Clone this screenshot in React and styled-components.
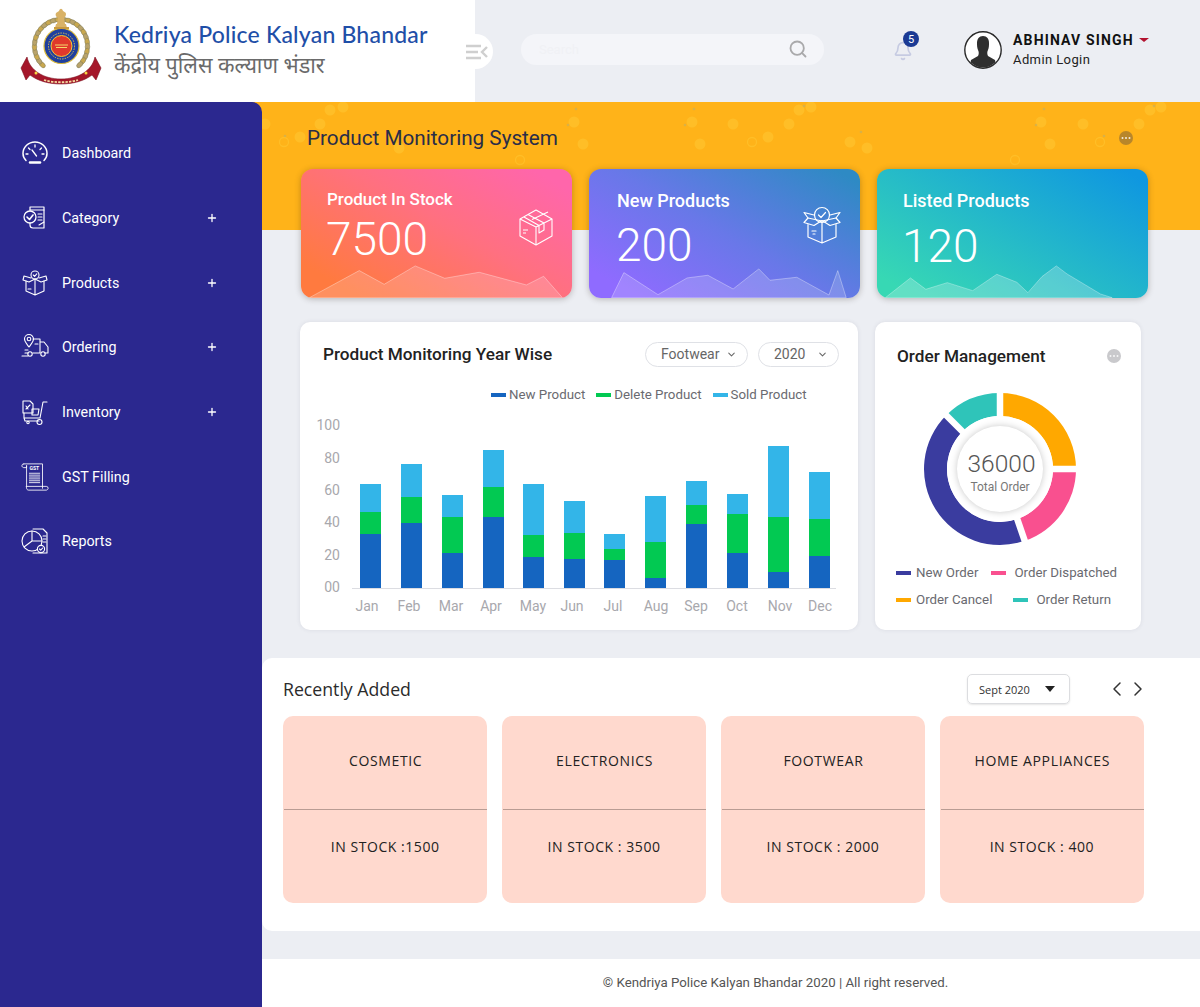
import React from "react";
import styled, { createGlobalStyle } from "styled-components";
import { Bell, ChevronDown, ChevronLeft, ChevronRight, Plus, Search } from "lucide-react";

const GlobalStyle = createGlobalStyle`
  * { box-sizing: border-box; }
  html, body { margin: 0; padding: 0; background: #eceef3; }
  body { font-family: Roboto, "Liberation Sans", sans-serif; }
`;

//Data
const bars = [
  { x: 360, top: 484, mid: 512, low: 534 },
  { x: 401, top: 464, mid: 497, low: 523 },
  { x: 442, top: 495, mid: 517, low: 553 },
  { x: 483, top: 450, mid: 487, low: 517 },
  { x: 523, top: 484, mid: 535, low: 557 },
  { x: 564, top: 501, mid: 533, low: 559 },
  { x: 604, top: 534, mid: 549, low: 560 },
  { x: 645, top: 496, mid: 542, low: 578 },
  { x: 686, top: 481, mid: 505, low: 524 },
  { x: 727, top: 494, mid: 514, low: 553 },
  { x: 768, top: 446, mid: 517, low: 572 },
  { x: 809, top: 472, mid: 519, low: 556 },
];
const months = [
  ["Jan", 367], ["Feb", 409], ["Mar", 451], ["Apr", 491], ["May", 533], ["Jun", 572],
  ["Jul", 613], ["Aug", 656], ["Sep", 696], ["Oct", 737], ["Nov", 780], ["Dec", 820],
];
const yTicks = [["100", 430], ["80", 463], ["60", 495], ["40", 527], ["20", 560], ["00", 592]];

const recent = [
  { name: "COSMETIC", stock: "IN STOCK :1500" },
  { name: "ELECTRONICS", stock: "IN STOCK : 3500" },
  { name: "FOOTWEAR", stock: "IN STOCK : 2000" },
  { name: "HOME APPLIANCES", stock: "IN STOCK : 400" },
];

const polar = (r, deg) => {
  const a = (deg * Math.PI) / 180;
  return [1000 + r * Math.sin(a), 469 - r * Math.cos(a)];
};
const sector = (from, to) => {
  const [ax, ay] = polar(76, from);
  const [bx, by] = polar(76, to);
  const [cx, cy] = polar(53, to);
  const [dx, dy] = polar(53, from);
  const big = to - from > 180 ? 1 : 0;
  return `M${ax} ${ay}A76 76 0 ${big} 1 ${bx} ${by}L${cx} ${cy}A53 53 0 ${big} 0 ${dx} ${dy}Z`;
};

//Drawings
const Emblem = () => (
  <svg width="100" height="95" viewBox="10 0 100 95">
    {Array.from({ length: 26 }).map((_, i) => {
      const deg = -135 + (i * 270) / 25;
      const [x, y] = [61 + 26.5 * Math.sin((deg * Math.PI) / 180), 46 - 26.5 * Math.cos((deg * Math.PI) / 180)];
      return <ellipse key={i} cx={x} cy={y} rx="3.6" ry="2.3" fill={i % 2 ? "#b9a36a" : "#c9a84f"} stroke="#7d7a5a" strokeWidth=".5" transform={`rotate(${deg} ${x} ${y})`} />;
    })}
    <circle cx="61.500" cy="46" r="17.500" fill="#1f3f9e" stroke="#d9b93a" strokeWidth="1.200" />
    <circle cx="61.500" cy="46" r="13" fill="none" stroke="#e6c84c" strokeWidth="1" strokeDasharray="1.400 1.200" />
    <circle cx="61.500" cy="46" r="10.500" fill="#e0392b" stroke="#f0c93a" strokeWidth="1" />
    <path d="M55 45h13M56 47.500h11" stroke="#f5d76a" strokeWidth="1" />
    <path d="M55 28l1-4h1l1-6c-2-1-3-3-2-5 1-1 2-1 3-2 1-3 3-3 4 0 1 1 3 1 3 3s-1 3-2 4l1 6h1l1 4z" fill="#d9b266" />
    <path d="M54 27h15v2H54z" fill="#c99a3e" />
    <path d="M27 57c3 14 17 22 34 22s31-8 34-22l6 11-5 12-4-5c-8 6-19 9-31 9s-23-3-31-9l-4 5-5-12z" fill="#a5172a" stroke="#7c0f1e" strokeWidth=".6" />
    <circle cx="36" cy="73" r="1.500" fill="#f6d743" />
    <circle cx="86" cy="73" r="1.500" fill="#f6d743" />
    <path d="M44 80c10 3 24 3 34 0" stroke="#f4dca0" strokeWidth="1.800" strokeDasharray="2.400 1.200" fill="none" />
  </svg>
);

const MenuToggleIcon = () => (
  <svg width="22" height="16" viewBox="0 0 22 16" fill="none" stroke="#cfcfcf" strokeWidth="2.400">
    <path d="M0 2h15M0 8h12M0 14h15" />
    <path d="M21 3l-5 5 5 5" />
  </svg>
);

const Avatar = () => (
  <svg width="38" height="38" viewBox="0 0 38 38">
    <defs>
      <clipPath id="avatarClip"><circle cx="19" cy="19" r="17.500" /></clipPath>
    </defs>
    <circle cx="19" cy="19" r="18.200" fill="#fff" stroke="#2a2a2a" strokeWidth="1.400" />
    <g clipPath="url(#avatarClip)" fill="#2f2f2f">
      <path d="M19 5c-4 0-6 3-6 7 0 2 0 5 1 7 1 2 1 4 0 6l-7 4-2 9h28l-2-9-7-4c-1-2-1-4 0-6 1-2 1-5 1-7 0-4-2-7-6-7z" />
    </g>
  </svg>
);

const NavSvg = ({ children }) => (
  <svg width="28" height="28" viewBox="0 0 28 28" fill="none" stroke="#fff" strokeWidth="1.100" strokeLinecap="round" strokeLinejoin="round">
    {children}
  </svg>
);

const GaugeIcon = () => (
  <NavSvg>
    <path d="M5 21.500C3 19.500 2 17 2 14.500 2 8 7.500 3 14 3s12 5 12 11.500c0 2.500-1 5-3 7" strokeWidth="1.500" />
    <path d="M14 6v2M7.500 9l1.500 1.500M20.500 9L19 10.500M5 15h2M21 15h2M11 11l4.500 6" strokeWidth="1.300" />
    <path d="M9 23.500h10" strokeWidth="2.500" />
  </NavSvg>
);
const CategoryIcon = () => (
  <NavSvg>
    <path d="M9 6V3h14v21H12c-2 0-3-1-3-3v-2" strokeWidth="1.200" />
    <path d="M9 6h14M17 10h4M17 13h4M17 16h4M18 21l5-3" />
    <circle cx="9" cy="13" r="6" strokeWidth="1.300" />
    <path d="M6 13l2.500 2.500L12 11" strokeWidth="1.600" />
  </NavSvg>
);
const ProductsIcon = () => (
  <NavSvg>
    <circle cx="14" cy="6" r="4" />
    <path d="M12.300 6l1.300 1.300 2.200-2.400" />
    <path d="M10 9L3 7l-1 4 6 2 6-3 6 3 6-2-1-4-7 2" />
    <path d="M5 12v10l9 4 9-4V12M14 10v16M7 20h3" />
  </NavSvg>
);
const OrderingIcon = () => (
  <NavSvg>
    <path d="M8 14C5 10 3.500 8.500 3.500 6a4.500 4.500 0 0 1 9 0c0 2.500-1.500 4-4.500 8z" />
    <circle cx="8" cy="6" r="1.800" />
    <path d="M12 6h7v14h-7M19 9h4l4 5v6h-3M4 20h3M1 23h6M4 17h3M14 11h3" />
    <circle cx="9" cy="21" r="2.200" />
    <circle cx="22" cy="21" r="2.200" />
  </NavSvg>
);
const InventoryIcon = () => (
  <NavSvg>
    <path d="M2 3h7l3 3v9H2z" />
    <path d="M5 11l4-4M5 8l2 3" />
    <path d="M3 15v5h16M3 20l1 3h14M26 4h-4l-3 16" />
    <path d="M11 11h7l-1 6h-6z" />
    <circle cx="18.500" cy="24" r="2.500" />
    <circle cx="7" cy="24.500" r="1.200" />
  </NavSvg>
);
const GstIcon = () => (
  <svg width="32" height="30" viewBox="0 0 32 30" fill="none" stroke="#fff" strokeWidth=".9" strokeLinecap="round" strokeLinejoin="round">
    <path d="M4 1h20v26M4 1a2 2 0 0 0-2 2c0 1 1 2 2 2h3V3M7 3v22M7 25h21a2 2 0 0 1 2 2c0 1-1 2-2 2H9c-1 0-2-1-2-2z" />
    <text x="10" y="8" fontFamily="Roboto" fontSize="5.500" fontWeight="700" fill="#fff" stroke="none">GST</text>
    <path d="M10 11h11M10 13h11M10 15h11M10 17h11M10 19h11M10 21h11" />
  </svg>
);
const ReportsIcon = () => (
  <NavSvg>
    <circle cx="11" cy="14" r="10" />
    <path d="M11 14V4M11 14l-8 6M11 14h10" />
    <path d="M12 2h10l4 4v20H12" />
    <path d="M22 9h3M22 12h3M22 15h3" />
    <circle cx="20" cy="22" r="3.600" fill="#2b288f" />
    <path d="M18.500 22l1.200 1.200 2-2.200" />
  </NavSvg>
);

const BoxIcon = () => (
  <svg width="36" height="38" viewBox="0 0 36 38" fill="none" stroke="#fff" strokeWidth="1.100" strokeLinejoin="round">
    <path d="M18 2l16 9v17L18 37 2 28V11z" />
    <path d="M2 11l16 8 16-8M18 19v18M10 6.500l16 8.500v7l-5 3v-7.500L6 9" />
    <path d="M14 11.500l16-7.500" />
    <path d="M5 22h5M5 25h3" />
  </svg>
);
const OpenBoxIcon = () => (
  <svg width="38" height="38" viewBox="0 0 38 38" fill="none" stroke="#fff" strokeWidth="1.200" strokeLinejoin="round" strokeLinecap="round">
    <circle cx="19" cy="9" r="7.500" />
    <path d="M15.500 9l2.500 2.500 4.500-5" />
    <path d="M11 9L1 6.500l4 5.500-4 4.500 10 3 8-5 8 5 10-3-4-4.500 4-5.500L27 9" />
    <path d="M5 12l14 3 14-3M5 18.500V31l14 6 14-6V18.500M19 15v22M9 25h4M10 28h2" />
  </svg>
);

const Spark = ({ view, points, stroke = "rgba(255,255,255,.38)", fill = "rgba(255,255,255,.17)" }) => (
  <SparkSvg viewBox={view} preserveAspectRatio="none">
    <polygon points={points} fill={fill} stroke={stroke} strokeWidth="2.500" />
  </SparkSvg>
);

const Dots = ({ $tone }) => (
  <DotButton $tone={$tone}>
    <svg width="10" height="4" viewBox="0 0 10 4" fill="#fff" opacity=".85">
      <circle cx="1.500" cy="2" r="1" /><circle cx="5" cy="2" r="1" /><circle cx="8.500" cy="2" r="1" />
    </svg>
  </DotButton>
);

const HeroPattern = () => {
  const spots = [
    [265, 124], [300, 137], [320, 124], [330, 110], [343, 107], [399, 148], [574, 122], [583, 144],
    [692, 122], [700, 144], [733, 124], [768, 137], [789, 124], [799, 110], [811, 107], [850, 142],
    [867, 148], [1041, 122], [1050, 144], [1083, 124], [1139, 124], [1150, 110], [1161, 107],
  ];
  const specks = [
    [576, 109], [568, 125], [694, 109], [685, 125], [804, 106], [861, 132],
    [1044, 109], [1036, 125], [1154, 106], [1104, 136], [346, 136], [285, 136],
  ];
  const rings = [[284, 142], [752, 142], [1100, 142], [1015, 160], [520, 160]];
  return (
    <PatternSvg width="938" height="128" viewBox="262 102 938 128">
      {spots.map(([x, y], i) => (
        <circle key={i} cx={x} cy={y} r="5.500" fill="#ffc02b" opacity=".8" />
      ))}
      {specks.map(([x, y], i) => (
        <circle key={i} cx={x} cy={y} r="1.300" fill="#c9b05a" opacity=".7" />
      ))}
      {rings.map(([x, y], i) => (
        <circle key={i} cx={x} cy={y} r="4.500" fill="none" stroke="#ffc02b" strokeWidth="1.300" opacity=".8" />
      ))}
    </PatternSvg>
  );
};

const BarChart = () => (
  <ChartSvg width="558" height="210" viewBox="300 410 558 210">
    {yTicks.map(([label, y]) => (
      <text key={label} x="340" y={y} textAnchor="end" fontFamily="Roboto" fontSize="14" fill="#a8a8ad">{label}</text>
    ))}
    {bars.map((b) => (
      <g key={b.x}>
        <rect x={b.x} y={b.top} width="21" height={b.mid - b.top} fill="#33b5e8" />
        <rect x={b.x} y={b.mid} width="21" height={b.low - b.mid} fill="#02c952" />
        <rect x={b.x} y={b.low} width="21" height={588 - b.low} fill="#1565c0" />
      </g>
    ))}
    <line x1="352" y1="588.500" x2="836" y2="588.500" stroke="#dcdde2" />
    {months.map(([label, x]) => (
      <text key={label} x={x} y="611" textAnchor="middle" fontFamily="Roboto" fontSize="14" fill="#a8a8ad">{label}</text>
    ))}
  </ChartSvg>
);

const Donut = () => (
  <DonutWrap>
    <svg width="160" height="160" viewBox="920 389 160 160">
      <path d={sector(0, 90)} fill="#ffa800" />
      <path d={sector(90, 161)} fill="#f9508f" />
      <path d={sector(161, 315)} fill="#3a3c9f" />
      <path d={sector(315, 360)} fill="#2fc4b9" />
      {[0, 90, 161, 315].map((deg) => {
        const [x, y] = polar(80, deg);
        return <line key={deg} x1="1000" y1="469" x2={x} y2={y} stroke="#fff" strokeWidth="6.500" />;
      })}
      <circle cx="1000" cy="469" r="53" fill="#fff" />
    </svg>
    <DonutCenter>
      <DonutValue>36000</DonutValue>
      <DonutLabel>Total Order</DonutLabel>
    </DonutCenter>
  </DonutWrap>
);

//Page
const App = () => (
  <Page>
    <GlobalStyle />
    <Header>
      <LogoBox>
        <Emblem />
        <BrandText>
          <BrandName>Kedriya Police Kalyan Bhandar</BrandName>
          <BrandHindi>केंद्रीय पुलिस कल्याण भंडार</BrandHindi>
        </BrandText>
        <ToggleBump><MenuToggleIcon /></ToggleBump>
      </LogoBox>
      <SearchBox>
        <SearchHint>Search</SearchHint>
        <Search size={20} color="#a9a9ab" strokeWidth={2.2} />
      </SearchBox>
      <BellWrap>
        <Bell size={20} color="#c6cbe2" strokeWidth={2} />
        <Badge>5</Badge>
      </BellWrap>
      <UserBox>
        <Avatar />
        <UserText>
          <UserName>ABHINAV SINGH<Caret /></UserName>
          <UserRole>Admin Login</UserRole>
        </UserText>
      </UserBox>
    </Header>

    <Body>
      <Sidebar>
        <NavItem><NavIcon><GaugeIcon /></NavIcon>Dashboard</NavItem>
        <NavItem><NavIcon><CategoryIcon /></NavIcon>Category<NavPlus><Plus size={12} strokeWidth={2.6} /></NavPlus></NavItem>
        <NavItem><NavIcon><ProductsIcon /></NavIcon>Products<NavPlus><Plus size={12} strokeWidth={2.6} /></NavPlus></NavItem>
        <NavItem><NavIcon><OrderingIcon /></NavIcon>Ordering<NavPlus><Plus size={12} strokeWidth={2.6} /></NavPlus></NavItem>
        <NavItem><NavIcon><InventoryIcon /></NavIcon>Inventory<NavPlus><Plus size={12} strokeWidth={2.6} /></NavPlus></NavItem>
        <NavItem><NavIcon><GstIcon /></NavIcon>GST Filling</NavItem>
        <NavItem><NavIcon><ReportsIcon /></NavIcon>Reports</NavItem>
      </Sidebar>

      <Main>
        <Hero>
          <HeroPattern />
          <HeroTop>
            <HeroTitle>Product Monitoring System</HeroTitle>
            <Dots $tone="#b8862a" />
          </HeroTop>
          <StatRow>
            <StatCard $bg="linear-gradient(30deg, #ff7a3f 12%, #ff7080 55%, #ff66ab 92%)" $top={18} $left={26}>
              <StatTitle $size={17}>Product In Stock</StatTitle>
              <StatValue $gap={1}>7500</StatValue>
              <StatIcon $top={39} $right={18}><BoxIcon /></StatIcon>
              <Spark view="30 28 707 386" points="52,413 182,332 247,373 328,318 405,355 495,337 618,375 663,349 712,413" />
            </StatCard>
            <StatCard $bg="linear-gradient(30deg, #8f6bff 10%, #6878e8 50%, #2e8ac4 95%)" $top={20} $left={28}>
              <StatTitle $size={18}>New Products</StatTitle>
              <StatValue $gap={5}>200</StatValue>
              <StatIcon $top={37} $right={19}><OpenBoxIcon /></StatIcon>
              <Spark view="784 28 707 386" points="843,413 875,338 964,404 1040,354 1094,346 1160,387 1227,327 1256,361 1326,352 1410,405 1433,332 1455,413" />
            </StatCard>
            <StatCard $bg="linear-gradient(30deg, #37d8b4 8%, #22b5cc 55%, #0f97e0 95%)" $top={20} $left={26}>
              <StatTitle $size={18}>Listed Products</StatTitle>
              <StatValue $gap={6}>120</StatValue>
              <Spark view="82 28 810 386" points="107,413 182,354 228,388 292,368 368,392 440,343 500,367 533,398 575,350 618,318 650,342 750,402 785,413" fill="rgba(255,255,255,.22)" />
            </StatCard>
          </StatRow>
        </Hero>

        <PanelRow>
          <ChartPanel>
            <PanelHead>
              <PanelTitle>Product Monitoring Year Wise</PanelTitle>
              <Filters>
                <FilterPill $width={103}>Footwear<ChevronDown size={11} strokeWidth={2.2} /></FilterPill>
                <FilterPill $width={81}>2020<ChevronDown size={11} strokeWidth={2.2} /></FilterPill>
              </Filters>
            </PanelHead>
            <ChartLegend>
              <LegendItem><Swatch $color="#1565c0" />New Product</LegendItem>
              <LegendItem><Swatch $color="#02c952" />Delete Product</LegendItem>
              <LegendItem><Swatch $color="#33b5e8" />Sold Product</LegendItem>
            </ChartLegend>
            <BarChart />
          </ChartPanel>

          <DonutPanel>
            <DonutHead>
              <PanelTitle>Order Management</PanelTitle>
              <Dots $tone="#c9c9cc" />
            </DonutHead>
            <Donut />
            <DonutLegend>
              <DonutLegendRow $gap={13}>
                <LegendItem $space={5}><Swatch $color="#3a3c9f" />New Order</LegendItem>
                <LegendItem $space={8}><Swatch $color="#f9508f" />Order Dispatched</LegendItem>
              </DonutLegendRow>
              <DonutLegendRow $gap={21}>
                <LegendItem $space={5}><Swatch $color="#ffa800" />Order Cancel</LegendItem>
                <LegendItem $space={8}><Swatch $color="#2fc4b9" />Order Return</LegendItem>
              </DonutLegendRow>
            </DonutLegend>
          </DonutPanel>
        </PanelRow>

        <Recent>
          <RecentHead>
            <RecentTitle>Recently Added</RecentTitle>
            <MonthSelect>Sept 2020<MonthCaret /></MonthSelect>
            <Pager>
              <ChevronLeft size={24} strokeWidth={1.5} />
              <ChevronRight size={24} strokeWidth={1.5} />
            </Pager>
          </RecentHead>
          <RecentGrid>
            {recent.map((item) => (
              <RecentCard key={item.name}>
                <RecentName>{item.name}</RecentName>
                <RecentStock>{item.stock}</RecentStock>
              </RecentCard>
            ))}
          </RecentGrid>
        </Recent>

        <Footer>© Kendriya Police Kalyan Bhandar 2020 | All right reserved.</Footer>
      </Main>
    </Body>
  </Page>
);

//Styles
const Page = styled.div`
  width: 1200px;
  height: 1007px;
  overflow: hidden;
  background: #eceef3;
`;

const Header = styled.header`
  display: flex;
  align-items: center;
  height: 102px;
`;

const LogoBox = styled.div`
  position: relative;
  display: flex;
  align-items: center;
  width: 475px;
  height: 102px;
  padding: 0 0 7px 10px;
  background: #fff;
`;

const BrandText = styled.div`
  display: flex;
  flex-direction: column;
  margin: 3px 0 0 4px;
`;

const BrandName = styled.div`
  font-family: Lato, sans-serif;
  font-size: 23px;
  font-weight: 500;
  letter-spacing: 0.2px;
  line-height: 30px;
  color: #1f4fa8;
`;

const BrandHindi = styled.div`
  font-family: "Noto Sans", "Noto Sans Devanagari", "DejaVu Sans", sans-serif;
  font-size: 21.500px;
  line-height: 31px;
  color: #6a6a6a;
`;

const ToggleBump = styled.div`
  position: absolute;
  top: 34px;
  left: 458px;
  display: flex;
  align-items: center;
  justify-content: center;
  width: 35px;
  height: 35px;
  padding-left: 2px;
  border-radius: 50%;
  background: #fff;
`;

const SearchBox = styled.div`
  display: flex;
  align-items: center;
  justify-content: space-between;
  width: 303px;
  height: 31px;
  margin: -4px 0 0 46px;
  padding: 0 16px 0 18px;
  border-radius: 16px;
  background: #f4f5f9;
`;

const SearchHint = styled.span`
  font-size: 13px;
  color: #f0f1f5;
`;

const BellWrap = styled.div`
  position: relative;
  display: flex;
  margin: 0 0 0 69px;
`;

const Badge = styled.span`
  position: absolute;
  top: -10px;
  right: -6px;
  display: flex;
  align-items: center;
  justify-content: center;
  width: 16px;
  height: 16px;
  border-radius: 50%;
  background: #1b3a94;
  font-size: 11px;
  color: #fff;
`;

const UserBox = styled.div`
  display: flex;
  align-items: center;
  gap: 11px;
  margin: -3px 0 0 51px;
`;

const UserText = styled.div`
  display: flex;
  flex-direction: column;
  gap: 3px;
`;

const UserName = styled.div`
  display: flex;
  align-items: center;
  font-size: 14px;
  font-weight: 700;
  letter-spacing: 1.150px;
  line-height: 18px;
  color: #111;
`;

const Caret = styled.i`
  width: 0;
  height: 0;
  margin-left: 5px;
  border-style: solid;
  border-width: 4px 5px 0;
  border-color: #b3122f transparent transparent;
`;

const UserRole = styled.div`
  font-size: 13px;
  letter-spacing: 0.4px;
  line-height: 16px;
  color: #222;
`;

const Body = styled.div`
  display: flex;
  height: 905px;
`;

const Sidebar = styled.aside`
  position: relative;
  z-index: 1;
  flex: 0 0 262px;
  padding-top: 19px;
  border-top-right-radius: 10px;
  background: #2b288f;
`;

const NavItem = styled.div`
  display: flex;
  align-items: center;
  height: 64.700px;
  padding: 0 44px 0 20px;
  font-size: 14.300px;
  color: #fff;
`;

const NavIcon = styled.span`
  display: flex;
  justify-content: center;
  width: 30px;
  margin-right: 12px;
`;

const NavPlus = styled.span`
  display: flex;
  margin-left: auto;
`;

const Main = styled.main`
  flex: 1;
  min-width: 0;
`;

const Hero = styled.section`
  position: relative;
  height: 196px;
  margin-left: -12px;
  padding: 0 52px 0 51px;
  background: linear-gradient(#ffb319 128px, transparent 128px);
`;

const PatternSvg = styled.svg`
  position: absolute;
  top: 0;
  left: 12px;
`;

const HeroTop = styled.div`
  position: relative;
  display: flex;
  align-items: center;
  justify-content: space-between;
  height: 67px;
  padding: 5px 15px 0 6px;
`;

const HeroTitle = styled.h1`
  margin: 0;
  font-size: 20.700px;
  font-weight: 400;
  color: #2a2d48;
`;

const DotButton = styled.span`
  display: flex;
  align-items: center;
  justify-content: center;
  width: 14px;
  height: 14px;
  border-radius: 50%;
  background: ${(p) => p.$tone};
`;

const StatRow = styled.div`
  position: relative;
  display: grid;
  grid-template-columns: repeat(3, 271px);
  gap: 17px;
`;

const StatCard = styled.div`
  position: relative;
  height: 129px;
  overflow: hidden;
  padding: ${(p) => p.$top}px 0 0 ${(p) => p.$left}px;
  border-radius: 12px;
  background: ${(p) => p.$bg};
  box-shadow: 0 1px 6px rgba(40, 30, 20, 0.28);
  color: #fff;
`;

const StatTitle = styled.div`
  font-size: ${(p) => p.$size}px;
  font-weight: 500;
  line-height: 24px;
`;

const StatValue = styled.div`
  margin-top: ${(p) => p.$gap}px;
  margin-left: -1px;
  font-size: 46px;
  font-weight: 300;
  line-height: 54px;
`;

const StatIcon = styled.span`
  position: absolute;
  top: ${(p) => p.$top}px;
  right: ${(p) => p.$right}px;
  display: flex;
`;

const SparkSvg = styled.svg`
  position: absolute;
  inset: 0;
  width: 100%;
  height: 100%;
`;

const PanelRow = styled.div`
  display: flex;
  gap: 17px;
  margin-top: 24px;
  padding-left: 38px;
`;

const Panel = styled.section`
  height: 308px;
  border-radius: 10px;
  background: #fff;
  box-shadow: 0 0 4px rgba(60, 60, 90, 0.1);
`;

const ChartPanel = styled(Panel)`
  display: flex;
  flex-direction: column;
  width: 558px;
`;

const DonutPanel = styled(Panel)`
  display: flex;
  flex-direction: column;
  width: 266px;
`;

const PanelHead = styled.div`
  display: flex;
  align-items: center;
  justify-content: space-between;
  padding: 19px 19px 0 23px;
`;

const PanelTitle = styled.h2`
  margin: 1px 0 0;
  font-size: 17.200px;
  font-weight: 500;
  line-height: 25px;
  color: #222;
`;

const Filters = styled.div`
  display: flex;
  gap: 10px;
`;

const FilterPill = styled.div`
  display: flex;
  align-items: center;
  justify-content: space-between;
  width: ${(p) => p.$width}px;
  height: 25px;
  padding: 0 10px 0 15px;
  border: 1px solid #dfe1e6;
  border-radius: 13px;
  font-size: 14px;
  color: #666;
`;

const ChartLegend = styled.div`
  display: flex;
  gap: 11px;
  margin: 19px 0 0 191px;
`;

const LegendItem = styled.div`
  display: flex;
  align-items: center;
  gap: ${(p) => p.$space || 3}px;
  font-size: 13.300px;
  line-height: 18px;
  color: #6a6a70;
`;

const Swatch = styled.i`
  width: 15px;
  height: 4px;
  background: ${(p) => p.$color};
`;

const ChartSvg = styled.svg`
  display: block;
  margin-top: 6px;
`;

const DonutHead = styled.div`
  display: flex;
  align-items: center;
  justify-content: space-between;
  padding: 21px 20px 0 22px;
`;

const DonutWrap = styled.div`
  position: relative;
  width: 160px;
  height: 160px;
  margin: 20px 0 0 45px;
`;

const DonutCenter = styled.div`
  position: absolute;
  top: 37px;
  left: 37px;
  display: flex;
  flex-direction: column;
  align-items: center;
  justify-content: center;
  width: 86px;
  height: 86px;
  padding-top: 6px;
  border-radius: 50%;
  background: #fff;
  box-shadow: 0 0 7px rgba(0, 0, 0, 0.22);
`;

const DonutValue = styled.div`
  margin-left: 3px;
  font-size: 24.500px;
  font-weight: 300;
  line-height: 30px;
  color: #555;
`;

const DonutLabel = styled.div`
  font-size: 12px;
  line-height: 17px;
  color: #777;
`;

const DonutLegend = styled.div`
  display: flex;
  flex-direction: column;
  gap: 9px;
  margin: 15px 0 0 21px;
`;

const DonutLegendRow = styled.div`
  display: flex;
  gap: ${(p) => p.$gap}px;
`;

const Recent = styled.section`
  height: 273px;
  margin-top: 28px;
  padding: 15px 0 0 21px;
  border-radius: 10px 0 0 10px;
  background: #fff;
`;

const RecentHead = styled.div`
  display: flex;
  align-items: center;
  height: 31px;
`;

const RecentTitle = styled.h2`
  flex: 0 0 684px;
  margin: 0;
  font-family: "Open Sans", sans-serif;
  font-size: 17.700px;
  font-weight: 500;
  color: #2b2b2b;
`;

const MonthSelect = styled.div`
  display: flex;
  align-items: center;
  justify-content: space-between;
  width: 103px;
  height: 30px;
  margin-top: 1px;
  padding: 0 14px 0 11px;
  border: 1px solid #dcdde0;
  border-radius: 5px;
  box-shadow: 0 1px 2px rgba(0, 0, 0, 0.1);
  font-family: "Open Sans", sans-serif;
  font-size: 11px;
  font-weight: 500;
  color: #333;
`;

const MonthCaret = styled.i`
  width: 0;
  height: 0;
  border-style: solid;
  border-width: 6px 5px 0;
  border-color: #222 transparent transparent;
`;

const Pager = styled.div`
  display: flex;
  gap: 0;
  margin-left: 35px;
  color: #333;

  svg + svg {
    margin-left: -3px;
  }
`;

const RecentGrid = styled.div`
  display: grid;
  grid-template-columns: repeat(4, 204.250px);
  gap: 14.670px;
  margin-top: 12px;
`;

const RecentCard = styled.article`
  height: 187px;
  border-radius: 10px;
  background: #ffd9ce;
  font-family: "Open Sans", sans-serif;
  font-size: 14px;
  color: #222;
  text-align: center;
`;

const RecentName = styled.div`
  height: 94px;
  margin-left: 1px;
  padding-top: 35px;
  border-bottom: 1px solid #b99c93;
  letter-spacing: 0.650px;
  line-height: 20px;
`;

const RecentStock = styled.div`
  padding-top: 27px;
  line-height: 20px;
  letter-spacing: 0.550px;
`;

const Footer = styled.footer`
  display: flex;
  align-items: center;
  justify-content: center;
  height: 48px;
  margin-top: 28px;
  padding: 0 0 2px 89px;
  background: #fff;
  font-size: 13.270px;
  color: #555;
`;

export default App;
